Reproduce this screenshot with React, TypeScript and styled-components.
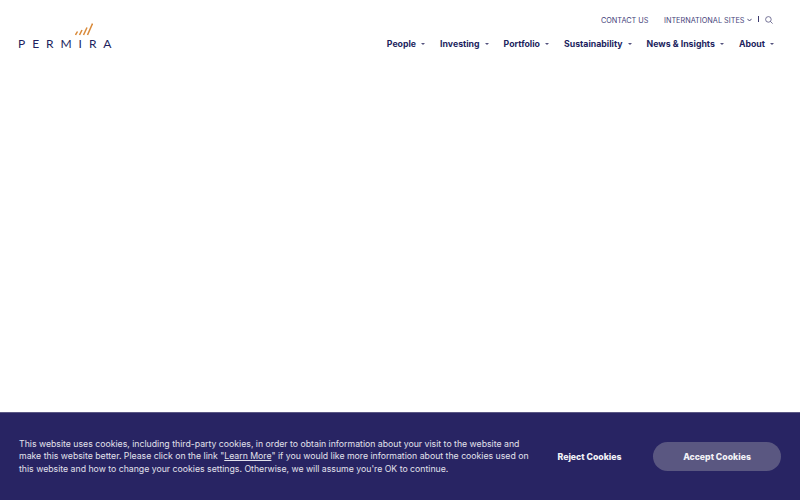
import * as React from "react"
import styled, { createGlobalStyle } from "styled-components"

const GlobalStyle = createGlobalStyle`
  html, body {
    margin: 0;
    padding: 0;
    height: 100%;
    background: #fff;
  }
  #root {
    height: 100%;
  }
`

const Page = styled.div`
  width: 800px;
  height: 500px;
  display: flex;
  flex-direction: column;
  justify-content: space-between;
  overflow: hidden;
  font-family: Inter, "Liberation Sans", sans-serif;
`

const Header = styled.header`
  display: flex;
  justify-content: space-between;
  align-items: flex-start;
  padding: 12px 26px 0 18px;
`

const Logo = styled.a`
  display: flex;
  flex-direction: column;
  width: 100px;
  padding-top: 11px;
`

const LogoWord = styled.span`
  margin-top: 3px;
  font-family: Lato, "Liberation Sans", sans-serif;
  font-size: 12px;
  line-height: 10px;
  font-weight: 400;
  letter-spacing: 6.95px;
  white-space: nowrap;
  color: #221f5e;
`

const LogoMark = styled.svg`
  display: block;
  width: 18px;
  height: 13px;
  margin-left: 57px;
`

const HeaderRight = styled.div`
  display: flex;
  flex-direction: column;
  align-items: flex-end;
  gap: 9px;
`

const TopBar = styled.div`
  display: flex;
  align-items: center;
  height: 16px;
  margin-right: 1px;
  font-size: 7.3px;
  color: #45437a;
`

const TopLink = styled.a`
  display: flex;
  align-items: center;
  gap: 2px;
  margin-left: 15.5px;
  white-space: nowrap;
`

const Divider = styled.span`
  width: 1px;
  height: 6px;
  margin: -3px 6px 0 6.5px;
  background: #3c3a6e;
`

const Nav = styled.nav`
  display: flex;
  gap: 15px;
`

const NavItem = styled.a`
  display: flex;
  align-items: center;
  gap: 5px;
  font-size: 8.75px;
  font-weight: 700;
  line-height: 14px;
  white-space: nowrap;
  color: #221f5e;
`

const Caret = styled.span`
  width: 0;
  height: 0;
  border-left: 2px solid transparent;
  border-right: 2px solid transparent;
  border-top: 2px solid #55537f;
`

const CookieBar = styled.section`
  display: flex;
  align-items: center;
  justify-content: space-between;
  box-sizing: border-box;
  height: 88px;
  padding: 0 19px;
  background: #282463;
  border-top: 1px solid #5b5885;
`

const CookieText = styled.p`
  width: 515px;
  margin: 0;
  font-size: 8.72px;
  line-height: 12.5px;
  color: #e2e1ec;
`

const LearnMore = styled.a`
  text-decoration: underline;
`

const Actions = styled.div`
  display: flex;
  align-items: center;
  gap: 31.5px;
`

const CookieButton = styled.button<{ $filled?: boolean }>`
  width: ${props => (props.$filled ? "128px" : "auto")};
  height: 29px;
  padding: 0;
  border: 0;
  border-radius: 15px;
  background: ${props => (props.$filled ? "#5a5781" : "transparent")};
  color: #f2f2f7;
  font-family: Inter, "Liberation Sans", sans-serif;
  font-size: 8.7px;
  font-weight: 800;
`

const navItems = ["People", "Investing", "Portfolio", "Sustainability", "News & Insights", "About"]

const App = () => {
  return (
    <Page>
      <GlobalStyle />
      <Header>
        <Logo>
          <LogoMark viewBox="0 0 18 13">
            <g stroke="#d98a3a" strokeWidth="1.5" fill="none">
              <path d="M0.5 12 L2.5 8.5" />
              <path d="M4.5 12 L7 7" />
              <path d="M8.5 12 L12 4.5" />
              <path d="M12.5 12 L17.5 0.5" />
            </g>
          </LogoMark>
          <LogoWord>PERMIRA</LogoWord>
        </Logo>
        <HeaderRight>
          <TopBar>
            <TopLink>CONTACT US</TopLink>
            <TopLink>
              INTERNATIONAL SITES
              <svg width="5" height="4" viewBox="0 0 5 4" fill="none" stroke="#3c3a6e" strokeWidth="0.9">
                <path d="M0.4 0.8 L2.5 3 L4.6 0.8" />
              </svg>
            </TopLink>
            <Divider />
            <svg width="8" height="8" viewBox="0 0 8 8" fill="none" stroke="#55537f" strokeWidth="0.8">
              <circle cx="3.4" cy="3.4" r="2.8" />
              <path d="M5.4 5.4 L7.6 7.6" />
            </svg>
          </TopBar>
          <Nav>
            {navItems.map(item => (
              <NavItem key={item}>
                {item}
                <Caret />
              </NavItem>
            ))}
          </Nav>
        </HeaderRight>
      </Header>
      <CookieBar>
        <CookieText>
          This website uses cookies, including third-party cookies, in order to obtain information about your visit to the website and make this website better. Please click on the link "<LearnMore>Learn More</LearnMore>" if you would like more information about the cookies used on this website and how to change your cookies settings. Otherwise, we will assume you're OK to continue.
        </CookieText>
        <Actions>
          <CookieButton>Reject Cookies</CookieButton>
          <CookieButton $filled>Accept Cookies</CookieButton>
        </Actions>
      </CookieBar>
    </Page>
  )
}

export default App
